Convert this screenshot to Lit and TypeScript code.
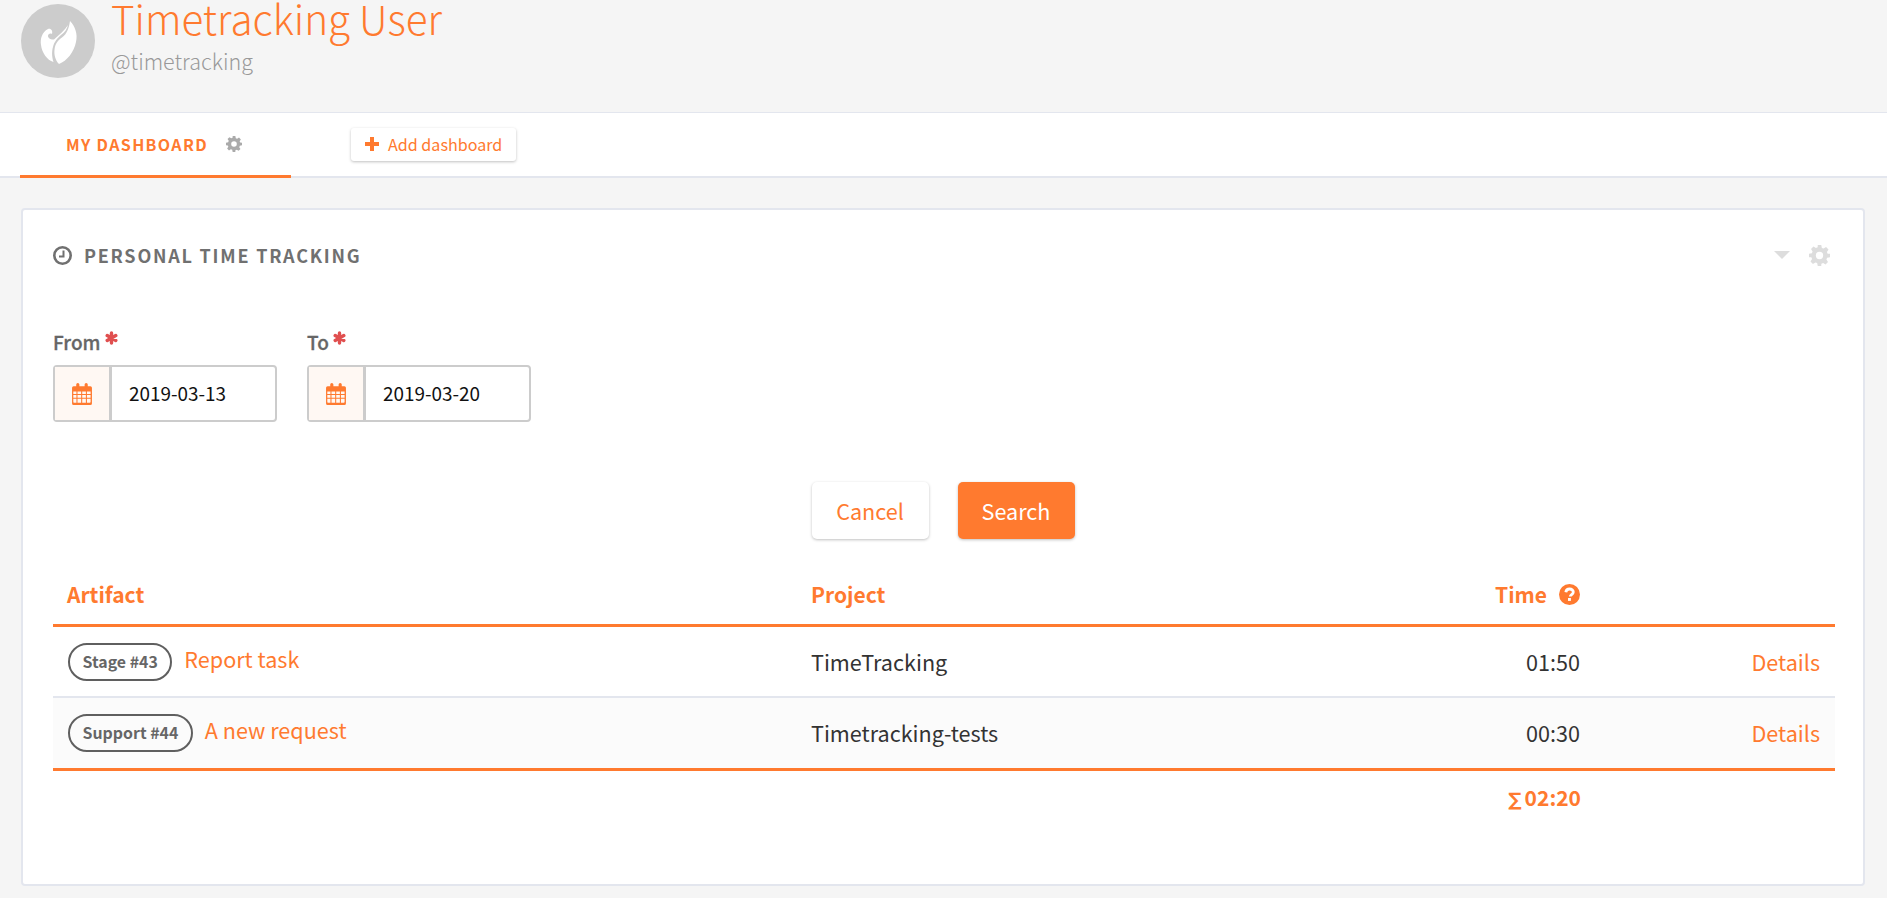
import { LitElement, html, css, svg } from "lit";
import { customElement } from "lit/decorators.js";

const F = "#ff7a2f";
const gear = (size: number, color: string) => html`<svg width=${size} height=${size} viewBox="0 0 24 24" fill=${color}><path fill-rule="evenodd" d="M10 0h4l.7 3.300 2 .8 2.800-1.800 2.800 2.800-1.800 2.800.8 2L24 10v4l-3.300.7-.8 2 1.800 2.800-2.800 2.800-2.800-1.800-2 .8L14 24h-4l-.7-3.300-2-.8-2.800 1.800-2.800-2.800 1.800-2.800-.8-2L0 14v-4l3.300-.7.8-2L2.300 4.500 5.100 1.700l2.800 1.800 2-.8L10 0Zm2 7.800a4.200 4.200 0 1 0 0 8.400 4.200 4.200 0 0 0 0-8.400Z"/></svg>`;
const calendar = html`<svg width="20" height="22" viewBox="0 0 19 21" fill=${F}><path fill-rule="evenodd" d="M1.500 3H4V1.500a1.300 1.300 0 0 1 3 0V3h5V1.500a1.300 1.300 0 0 1 3 0V3h2.500A1.500 1.500 0 0 1 19 4.500v15a1.500 1.500 0 0 1-1.500 1.500h-16A1.500 1.500 0 0 1 0 19.500v-15A1.500 1.500 0 0 1 1.500 3ZM1.200 8v2.500h3V8h-3Zm4 0v2.500h3.500V8H5.200Zm4.500 0v2.500h3.500V8H9.700Zm4.500 0v2.500h3.500V8h-3.500ZM1.200 11.500V14h3v-2.500h-3Zm4 0V14h3.500v-2.500H5.200Zm4.500 0V14h3.500v-2.500H9.700Zm4.500 0V14h3.500v-2.500h-3.500ZM1.200 15v2.800c0 .6.400 1 1 1h2V15h-3Zm4 0v3.800h3.500V15H5.200Zm4.500 0v3.800h3.500V15H9.700Zm4.500 0v3.800h2.500c.6 0 1-.4 1-1V15h-3.500Z"/></svg>`;
const clock = html`<svg width="19" height="19" viewBox="0 0 19 19" fill="none" stroke="#707070"><circle cx="9.500" cy="9.500" r="8.200" stroke-width="2.600"/><path d="M10.500 4.500V10.500H6" stroke-width="2"/></svg>`;
const help = html`<svg width="21" height="21" viewBox="0 0 21 21"><circle cx="10.500" cy="10.500" r="10.500" fill=${F}/><path d="M6.800 8.200c.3-2 1.800-3.200 3.800-3.200 2.100 0 3.700 1.300 3.700 3.100 0 2.500-3 2.600-3 4.400" fill="none" stroke="#fff" stroke-width="2.800"/><rect x="9" y="14" width="2.900" height="2.900" fill="#fff"/></svg>`;
const star = html`<svg class="req" width="13" height="14" viewBox="0 0 13 14" stroke="#e04f4f" stroke-width="3.400" stroke-linecap="round"><path d="M6.500 2v10M2.200 4.500l8.600 5M2.200 9.500l8.600-5"/></svg>`;
const leaf = svg`<path fill="#fff" d="M49 17C54 22 57 30 55 38C53 48 46 57 38 60C34 56 33 50 33.500 46C34 40 37 36 41 33.500C46 30 48 24 49 17Z"/><path fill="#fff" d="M27 25C21 28 19 35 20 41C21 49 26 56 32.500 58C30.500 52 31 46 32 43C33 38 37 33.500 40 31C44 28 46 25 47 21C44 26 38 31 33 35.500C30 36 27 34 27 32C27 30 29 29 31 30C32 27 30 24 27 25Z"/>`;

@customElement("app-root")
export class AppRoot extends LitElement {
  static styles = css`
    :host { --o: #ff7a2f; display: block; height: 898px; overflow: hidden; background: #f5f5f5; color: #333;
      font-family: "Noto Sans CJK JP", "Noto Sans", sans-serif; font-size: 21.6px; }
    * { box-sizing: border-box; }
    .hero { height: 113px; display: flex; gap: 16px; padding: 4px 0 0 21px; border-bottom: 1px solid #e3e6ee; }
    .avatar { width: 74px; height: 74px; flex: none; }
    .who { margin-top: -13px; }
    .name { font-size: 40.4px; font-weight: 300; line-height: 54px; color: var(--o); white-space: nowrap; }
    .handle { font-size: 21.5px; font-weight: 300; line-height: 30px; color: #999; margin-top: 1px; }
    .tabs { height: 65px; background: #fff; display: flex; align-items: flex-start; padding-left: 20px; border-bottom: 2px solid #e3e6ee; }
    .tab { width: 271px; height: 65px; border-bottom: 3px solid var(--o); display: flex; align-items: center; padding: 0 0 1px 46px; gap: 18px;
      font-size: 16px; font-weight: 700; letter-spacing: 1.350px; color: var(--o); }
    .add { margin: 15px 0 0 60px; height: 33px; width: 165px; display: flex; align-items: center; gap: 9px; padding: 0 0 1px 14px;
      background: #fff; border-radius: 3px; box-shadow: 0 1px 3px rgba(0,0,0,.25); font-size: 16.1px; color: var(--o); }
    .card { margin: 30px 22px 0 21px; height: 678px; background: #fff; border: 2px solid #e3e6ee; border-radius: 4px; padding: 0 28px 0 30px; }
    .head { display: flex; align-items: center; height: 90px; gap: 12px; }
    .title { font-size: 18px; font-weight: 700; letter-spacing: 1.770px; color: #707070; flex: 1; }
    .gray { display: flex; align-items: center; gap: 19px; margin-right: 5px; }
    .tri { width: 0; height: 0; border: 8px solid transparent; border-top: 8px solid #ddd; border-bottom: 0; }
    .fields { display: flex; gap: 30px; margin-top: 29px; }
    .label { font-size: 19px; font-weight: 500; color: #666; -webkit-text-stroke: .3px #666; line-height: 26px; height: 36px; display: flex; gap: 4px; }
    .req { margin-top: 2px; }
    .input { width: 224px; height: 57px; display: flex; border: 2px solid #ccc; border-radius: 4px; }
    .addon { width: 57px; flex: none; background: #fff8f3; border-right: 3px solid #ccc; display: flex; align-items: center; justify-content: center; }
    .val { padding-left: 17px; line-height: 52px; font-size: 18.9px; color: #111; }
    .actions { display: flex; justify-content: center; gap: 29px; margin-top: 60px; padding-right: 2px; }
    .btn { width: 117px; height: 57px; border-radius: 5px; display: flex; align-items: center; justify-content: center; padding-bottom: 1px;
      background: #fff; color: var(--o); box-shadow: 0 1px 3px rgba(0,0,0,.25); }
    .btn.primary { background: var(--o); color: #fff; }
    .row { display: grid; grid-template-columns: 744px 640px 157px 1fr; align-items: center; }
    .row > * { padding: 0 14px; }
    .row > .link { padding-right: 15px; }
    .thead { height: 88px; border-bottom: 3px solid var(--o); font-weight: 700; font-size: 21px; color: var(--o); padding-top: 25px; }
    .time { display: flex; justify-content: flex-end; align-items: center; gap: 12px; }
    .tr { height: 71px; border-bottom: 2px solid #e3e6ee; }
    .tr.alt { background: #fbfbfb; height: 70px; border-bottom: 0; padding-bottom: 1px; }
    .art { display: flex; align-items: center; gap: 12px; color: var(--o); }
    .t { margin-top: -6px; }
    .badge { height: 38px; margin-left: 1px; border: 2px solid #5f5f5f; border-radius: 19px; padding: 0 12.500px; display: flex; align-items: center; font-size: 15.900px; font-weight: 700; color: #666; }
    .link { text-align: right; color: var(--o); }
    .line { border-top: 3px solid var(--o); }
    .total { padding: 11px 254px 0 0; display: flex; justify-content: flex-end; align-items: baseline; gap: 3px; font-weight: 700; font-size: 21px; color: var(--o); }
    .sum { font-family: "DejaVu Sans", sans-serif; font-size: 18.500px; font-weight: 700; }
  `;

  render() {
    const dateField = (label: string, value: string) => html`<div>
      <div class="label">${label}${star}</div>
      <div class="input"><div class="addon">${calendar}</div><div class="val">${value}</div></div>
    </div>`;
    const row = (kind: string, num: string, title: string, project: string, time: string, cls: string) => html`<div class="row tr ${cls}">
      <div class="art"><span class="badge">${kind} #${num}</span><span class="t">${title}</span></div>
      <div>${project}</div>
      <div class="time">${time}</div>
      <div class="link">Details</div>
    </div>`;
    return html`
      <div class="hero">
        <svg class="avatar" viewBox="0 0 74 74"><circle cx="37" cy="37" r="37" fill="#ccc"/>${leaf}</svg>
        <div class="who"><div class="name">Timetracking User</div><div class="handle">@timetracking</div></div>
      </div>
      <div class="tabs">
        <div class="tab">MY DASHBOARD ${gear(16, "#aaa")}</div>
        <div class="add"><svg width="14" height="14" viewBox="0 0 14 14" fill=${F}><path d="M5 0h4v5h5v4H9v5H5V9H0V5h5z"/></svg>Add dashboard</div>
      </div>
      <div class="card">
        <div class="head">${clock}<div class="title">PERSONAL TIME TRACKING</div>
          <div class="gray"><span class="tri"></span>${gear(21, "#ddd")}</div></div>
        <div class="fields">${dateField("From", "2019-03-13")}${dateField("To", "2019-03-20")}</div>
        <div class="actions"><div class="btn">Cancel</div><div class="btn primary">Search</div></div>
        <div class="row thead"><div>Artifact</div><div>Project</div><div class="time"><span>Time</span>${help}</div><div></div></div>
        ${row("Stage", "43", "Report task", "TimeTracking", "01:50", "")}
        ${row("Support", "44", "A new request", "Timetracking-tests", "00:30", "alt")}
        <div class="line"></div>
        <div class="total"><span class="sum">∑</span><span>02:20</span></div>
      </div>`;
  }
}
